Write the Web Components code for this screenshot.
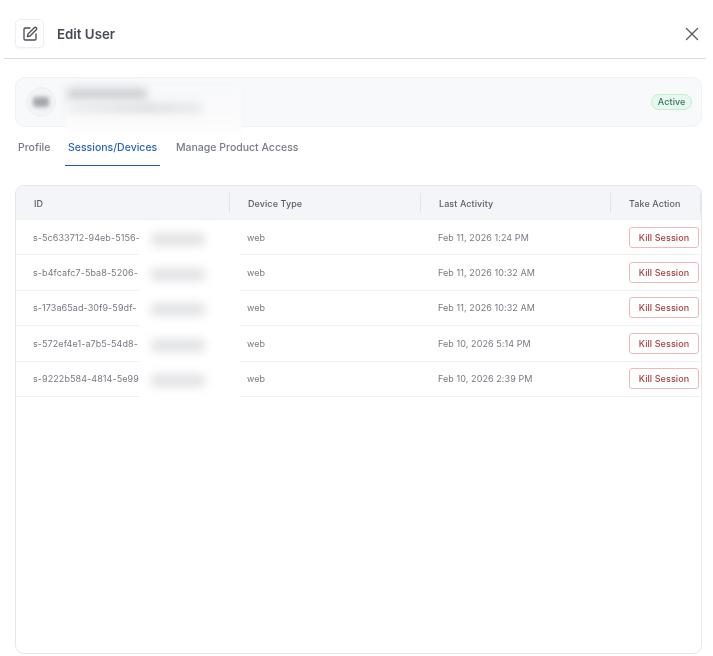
<!DOCTYPE html>
<html lang="en"><head><meta charset="utf-8"><title>Edit User</title>
<style>html,body{margin:0;height:100%;background:#fff}body{font-family:Inter,"Liberation Sans",sans-serif}</style>
</head><body>
<edit-user-dialog></edit-user-dialog>
<template id="t-dialog"><style>
:host{display:flex;flex-direction:column;width:713px;height:656px;box-sizing:border-box;padding:0 11px 2px 15px;overflow:hidden;background:#fff;filter:blur(.35px)}
header{display:flex;align-items:center;height:59px;box-sizing:border-box;margin:0 -4px 0 -11px;padding:9px 7px 0 11px;border-bottom:1px solid #d9dbde;flex:none}
.ic{width:29px;height:29px;box-sizing:border-box;border:1px solid #eceef0;border-radius:5px;display:flex;align-items:center;justify-content:center;box-shadow:0 1px 2px rgba(16,24,40,.04)}
h1{margin:0 0 0 13px;font-size:13.3px;font-weight:600;color:#454b54;flex:1;line-height:20px}
.x{display:flex}
</style>
<header><span class="ic"><svg width="16" height="16" viewBox="0 0 24 24" fill="none" stroke="#4a4f57" stroke-width="2" stroke-linecap="round" stroke-linejoin="round"><path d="M12 3H5a2 2 0 0 0-2 2v14a2 2 0 0 0 2 2h14a2 2 0 0 0 2-2v-7"/><path d="M18.4 2.6a2.1 2.1 0 1 1 3 3L12 15l-4 1 1-4Z"/></svg></span><h1>Edit User</h1><span class="x"><svg width="14" height="14" viewBox="0 0 14 14" fill="none" stroke="#565b63" stroke-width="1.3" stroke-linecap="round"><path d="M1.5 1.5l11 11M12.5 1.5l-11 11"/></svg></span></header>
<user-card></user-card><tab-bar></tab-bar><sessions-table></sessions-table></template>

<template id="t-card"><style>
:host{display:flex;align-items:center;justify-content:space-between;position:relative;height:50px;box-sizing:border-box;margin-top:18px;padding:0 9px 0 10px;background:#f8f9fb;border:1px solid #f0f1f4;border-radius:10px;flex:none}
.av{width:30px;height:30px;border-radius:50%;background:#f3f4f6;border:1px solid #eff0f3;box-sizing:border-box;display:flex;align-items:center;justify-content:center}
.av i{display:block;width:16px;height:10px;border-radius:3px;background:#a3a6ac;filter:blur(2px)}
.patch{position:absolute;left:50px;top:8px;width:175px;height:50px;background:linear-gradient(#f8f9fb 0,#fbfbfc 70%,#fefefe 100%);filter:blur(2px)}
.n1,.n2{position:absolute;filter:blur(4px);border-radius:3px}
.n1{left:51px;top:10px;width:80px;height:12px;background:#cfd0d4}
.n2{left:51px;top:25px;width:135px;height:10px;background:linear-gradient(90deg,#eceded,#dcdde0 60%,#e9eaec)}
.b{font-size:9px;font-weight:500;color:#2f7a58;background:#e8f8ef;border:1px solid #c4ecd4;border-radius:9px;padding:0 5.5px;line-height:14px;height:14px;letter-spacing:.1px}
</style><span class="av"><i></i></span><span class="patch"></span><span class="n1"></span><span class="n2"></span><span class="b">Active</span></template>

<template id="t-tabs"><style>
:host{display:flex;flex:none;height:39px;box-sizing:border-box;padding-left:3px;margin-bottom:19px;font-size:10.5px;font-weight:500;color:#777c85}
span{display:block;line-height:16px;padding-top:13px;box-sizing:border-box;height:39px}
.p{width:47px}
.a{width:95px;padding-left:3px;color:#2c5fc4;border-bottom:1.5px solid #2458c2;margin-right:16px}
</style><span class="p">Profile</span><span class="a">Sessions/Devices</span><span>Manage Product Access</span></template>

<template id="t-table"><style>
:host{display:flex;flex-direction:column;flex:1;min-height:0;border:1px solid #e4e6e9;border-radius:9px;overflow:hidden;background:#fff;font-size:9px;color:#757a82;letter-spacing:.08px}
.row{display:grid;grid-template-columns:214px 191px 190px 1fr}
.head{height:34px;padding-top:1px;background:#f3f5f8;color:#596069;font-weight:500;align-items:center;border-bottom:1px solid #f0f1f4;box-sizing:border-box}
.head span{display:flex;align-items:center;height:20px;padding-left:18px;border-right:1px solid #e3e5e9;box-sizing:border-box}
</style>
<div class="row head"><span>ID</span><span>Device Type</span><span>Last Activity</span><span>Take Action</span></div>
<session-row sid="s-5c633712-94eb-5156-" when="Feb 11, 2026 1:24 PM"></session-row>
<session-row sid="s-b4fcafc7-5ba8-5206-" when="Feb 11, 2026 10:32 AM"></session-row>
<session-row sid="s-173a65ad-30f9-59df-" when="Feb 11, 2026 10:32 AM"></session-row>
<session-row sid="s-572ef4e1-a7b5-54d8-" when="Feb 10, 2026 5:14 PM"></session-row>
<session-row sid="s-9222b584-4814-5e99-" when="Feb 10, 2026 2:39 PM"></session-row>
</template>

<template id="t-row"><style>
:host{display:grid;grid-template-columns:214px 191px 190px 1fr;align-items:center;height:35.4px;box-sizing:border-box;border-bottom:1px solid #eef0f2;position:relative}
span{padding-left:17px;white-space:nowrap}
.id{position:relative;overflow:visible}
.mask{position:absolute;left:123px;top:-8px;width:101px;height:32px;padding:0;background:#fff}
.mask i{position:absolute;left:12px;top:9px;width:54px;height:13px;border-radius:4px;background:#e2e3e5;filter:blur(5px)}
button{all:unset;box-sizing:border-box;display:block;width:70px;height:21px;margin-left:18px;text-align:center;line-height:19px;font-size:9px;font-weight:500;color:#a83c3c;border:1px solid #eeb9b9;border-radius:3px;background:#fff;font-family:inherit}
</style><span class="id"><b style="font-weight:400"></b><span class="mask"><i></i></span></span><span>web</span><span class="w"></span><div><button>Kill Session</button></div></template>

<script>
function def(name,tid,init){customElements.define(name,class extends HTMLElement{constructor(){super();this.attachShadow({mode:'open'}).appendChild(document.getElementById(tid).content.cloneNode(true));}connectedCallback(){init&&init(this)}})}
def('user-card','t-card');def('tab-bar','t-tabs');def('sessions-table','t-table');
def('session-row','t-row',h=>{h.shadowRoot.querySelector('b').textContent=h.getAttribute('sid');h.shadowRoot.querySelector('.w').textContent=h.getAttribute('when')});
def('edit-user-dialog','t-dialog');
</script></body></html>
